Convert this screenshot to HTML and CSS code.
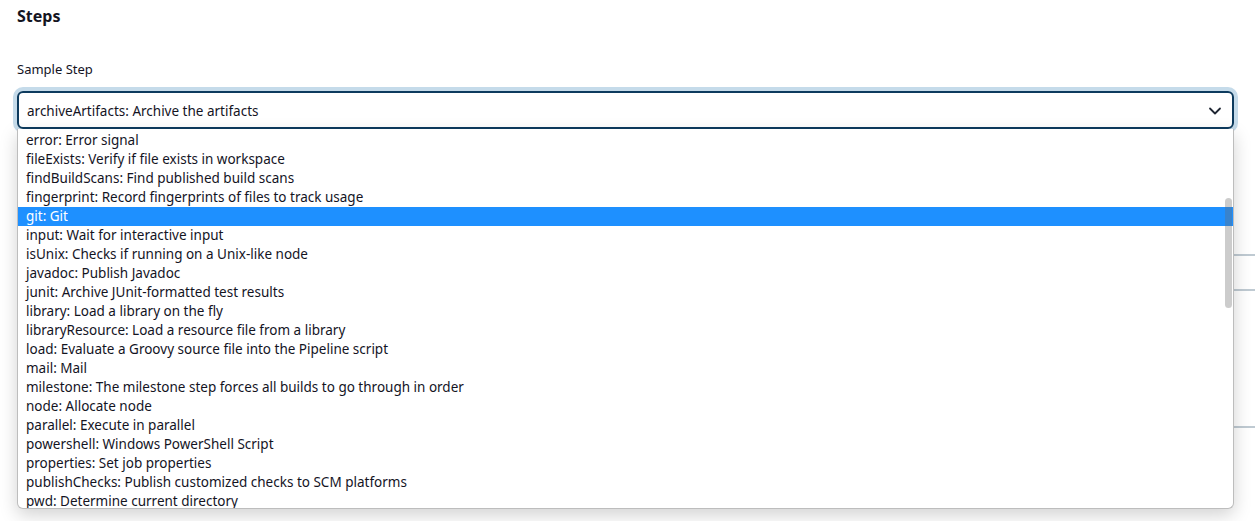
FILE: index.html
```html
<!DOCTYPE html>
<html lang="en">
<head>
  <meta charset="UTF-8" />
  <meta name="viewport" content="width=device-width, initial-scale=1.0" />
  <title>Pipeline Syntax</title>
  <link rel="stylesheet" href="styles.css">
</head>
<body>
  <main class="page">
    <h2 class="section-title">Steps</h2>

    <div class="field">
      <label class="field-label">Sample Step</label>
      <div class="picker">
        <div class="picker-box">
          <span>archiveArtifacts: Archive the artifacts</span>
          <svg class="chevron" width="14" height="14" viewBox="0 0 14 14">
            <path d="M2 4.5 L7 9.5 L12 4.5" fill="none" stroke="#1f2633" stroke-width="1.8" stroke-linecap="round" stroke-linejoin="round"/>
          </svg>
        </div>

        <ul class="picker-list">
          <li>error: Error signal</li>
          <li>fileExists: Verify if file exists in workspace</li>
          <li>findBuildScans: Find published build scans</li>
          <li>fingerprint: Record fingerprints of files to track usage</li>
          <li class="active">git: Git</li>
          <li>input: Wait for interactive input</li>
          <li>isUnix: Checks if running on a Unix-like node</li>
          <li>javadoc: Publish Javadoc</li>
          <li>junit: Archive JUnit-formatted test results</li>
          <li>library: Load a library on the fly</li>
          <li>libraryResource: Load a resource file from a library</li>
          <li>load: Evaluate a Groovy source file into the Pipeline script</li>
          <li>mail: Mail</li>
          <li>milestone: The milestone step forces all builds to go through in order</li>
          <li>node: Allocate node</li>
          <li>parallel: Execute in parallel</li>
          <li>powershell: Windows PowerShell Script</li>
          <li>properties: Set job properties</li>
          <li>publishChecks: Publish customized checks to SCM platforms</li>
          <li>pwd: Determine current directory</li>
        </ul>
        <div class="thumb"></div>
      </div>
    </div>

    <div class="behind">
      <div class="rule rule-a"></div>
      <div class="rule rule-b"></div>
      <div class="rule rule-c"></div>
    </div>
  </main>
</body>
</html>
```

FILE: styles.css
```css
body {
  margin: 0;
  font-family: "Noto Sans", "Open Sans", Arial, sans-serif;
  color: #14141f;
  background: #fff;
  overflow: hidden;
}
.page {
  padding: 0 21px 0 17px;
}
.section-title {
  margin: 0;
  padding-top: 5px;
  font-size: 16px;
  line-height: 22px;
  font-weight: 700;
}
.field {
  margin-top: 32px;
}
.field-label {
  display: block;
  font-size: 13px;
  line-height: 20px;
}
.picker {
  position: relative;
  margin-top: 12px;
}
.picker-box {
  display: flex;
  align-items: center;
  justify-content: space-between;
  height: 33px;
  padding: 1px 10px 0 8px;
  border: 2px solid #0d3b5e;
  border-radius: 6px;
  box-shadow: 0 0 0 4px #c5dbea;
  font-size: 13.5px;
}
.chevron {
  display: block;
}
.picker-list {
  position: absolute;
  top: 38px;
  left: 0;
  right: 0;
  box-sizing: border-box;
  margin: 0;
  padding: 2px 0 0;
  list-style: none;
  height: 380px;
  overflow: hidden;
  background: #fff;
  border: 1px solid #bdbdbd;
  border-top: none;
  border-radius: 0 0 6px 6px;
  box-shadow: 0 6px 18px rgba(0, 0, 0, 0.18);
  font-size: 13.5px;
  z-index: 2;
}
.picker-list li {
  height: 19px;
  line-height: 19px;
  padding-left: 8px;
  white-space: nowrap;
}
.picker-list li.active {
  background: #1e90ff;
  color: #fff;
}
.thumb {
  position: absolute;
  top: 107px;
  right: 2px;
  width: 7px;
  height: 110px;
  border-radius: 4px;
  background: rgba(110, 110, 110, 0.35);
  z-index: 3;
}
.behind {
  position: relative;
  margin-right: -21px;
  height: 320px;
}
.rule {
  border-top: 2px solid #bfcad2;
}
.rule-a {
  margin-top: 125px;
}
.rule-b {
  margin-top: 33px;
}
.rule-c {
  margin-top: 135px;
}
```
